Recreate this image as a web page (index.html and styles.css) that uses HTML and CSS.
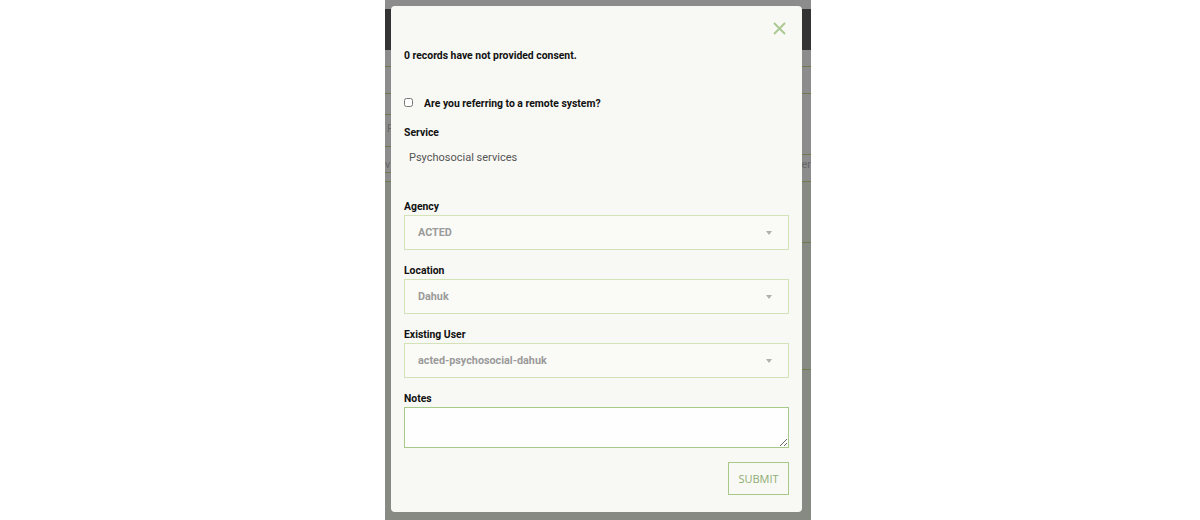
FILE: index.html
```html
<!DOCTYPE html>
<html>
<head>
<meta charset="utf-8">
<link rel="stylesheet" href="styles.css">
</head>
<body>
<div class="page">
  <div class="backdrop">
    <div class="bd-top"></div>
    <div class="bd-header"></div>
    <div class="bd-row bd-r1"></div>
    <div class="bd-row bd-r2"></div>
    <div class="bd-row bd-r3">
      <span class="bd-f">F</span>
      <span class="seg seg-l" style="top:20px"></span>
      <span class="seg seg-l" style="top:52px"></span>
      <span class="seg seg-l" style="top:78px"></span>
      <span class="seg seg-r" style="top:60px"></span>
      <span class="bd-v">v</span><span class="bd-ler">ler</span>
    </div>
    <div class="bd-lower">
      <span class="seg seg-r" style="top:60px"></span>
      <span class="seg seg-r" style="top:187px"></span>
    </div>

    <div class="modal">
      <button class="close" aria-label="Close">
        <svg width="13" height="13" viewBox="0 0 13 13"><path d="M1 1L12 12M12 1L1 12" stroke="#a9c88f" stroke-width="1.8" fill="none"/></svg>
      </button>
      <p class="title">0 records have not provided consent.</p>
      <label class="check-row"><input type="checkbox" class="cb"><span>Are you referring to a remote system?</span></label>
      <div class="label label-service">Service</div>
      <div class="service-value">Psychosocial services</div>

      <div class="field first">
        <div class="label">Agency</div>
        <div class="select"><span>ACTED</span><i class="arrow"></i></div>
      </div>
      <div class="field">
        <div class="label">Location</div>
        <div class="select"><span>Dahuk</span><i class="arrow"></i></div>
      </div>
      <div class="field">
        <div class="label">Existing User</div>
        <div class="select"><span>acted-psychosocial-dahuk</span><i class="arrow"></i></div>
      </div>
      <div class="field">
        <div class="label">Notes</div>
        <textarea class="notes"></textarea>
      </div>
      <div class="actions"><button class="submit">SUBMIT</button></div>
    </div>
  </div>
</div>
</body>
</html>
```
FILE: styles.css
```css
html, body {
  margin: 0;
  padding: 0;
  background: #ffffff;
  font-family: Roboto, "Liberation Sans", Arial, sans-serif;
}
.page {
  width: 1200px;
  height: 520px;
  display: flex;
  padding-left: 385px;
  box-sizing: border-box;
}
.backdrop {
  position: relative;
  width: 426px;
  height: 520px;
  background: #878a82;
  display: flex;
  flex-direction: column;
  overflow: hidden;
}
.bd-top { height: 9px; background: #8c8c8c; }
.bd-header { height: 41px; background: #343434; }
.bd-row { background: #8c8c8c; border-bottom: 1px solid #6f7a4e; position: relative; }
.bd-r1 { height: 16px; }
.bd-r2 { height: 26px; }
.bd-r3 { height: 87px; }
.seg { position: absolute; width: 10px; border-top: 1px solid #6f7a4e; }
.seg-l { left: 0; }
.seg-r { right: 0; }
.bd-f { position: absolute; left: 2px; top: 28px; font-size: 11px; color: #666; }
.bd-v { position: absolute; left: 0; top: 64px; font-size: 11px; color: #666; }
.bd-ler { position: absolute; right: 0; top: 64px; font-size: 11px; color: #666; }
.bd-lower { flex: 1; background: #878a82; position: relative; }

.modal {
  position: absolute;
  left: 6px;
  top: 6px;
  width: 411px;
  height: 506px;
  box-sizing: border-box;
  background: #f8f8f4;
  border-radius: 4px;
  padding: 43px 13px 0 13px;
}
.close {
  position: absolute;
  top: 16px;
  right: 16px;
  width: 13px;
  height: 13px;
  padding: 0;
  border: 0;
  background: none;
  display: flex;
}
.title {
  margin: 0;
  font-size: 10.4px;
  line-height: 14px;
  font-weight: bold;
  color: #111;
}
.check-row {
  display: flex;
  align-items: center;
  margin-top: 33px;
  height: 14px;
  font-size: 10.4px;
  font-weight: bold;
  color: #111;
}
.cb {
  width: 9px;
  height: 9px;
  margin: 0 11px 0 0;
  position: relative;
  top: -1px;
}
.label {
  font-size: 10.4px;
  line-height: 14px;
  font-weight: bold;
  color: #111;
}
.label-service { margin-top: 16px; }
.service-value {
  margin-top: 10px;
  padding-left: 5px;
  font-size: 11px;
  line-height: 16px;
  color: #555;
}
.field { margin-top: 14px; }
.field.first { margin-top: 34px; }
.field .label { margin-bottom: 1px; }
.select {
  height: 35px;
  box-sizing: border-box;
  border: 1px solid #d4e2b9;
  background: #fafaf7;
  display: flex;
  align-items: center;
  justify-content: space-between;
  padding: 0 16px 0 13px;
  font-size: 10.8px;
  font-weight: bold;
  color: #9a9a9a;
}
.arrow {
  width: 0;
  height: 0;
  border-left: 3px solid transparent;
  border-right: 3px solid transparent;
  border-top: 4px solid #b0b0b0;
}
.notes {
  display: block;
  width: 385px;
  height: 41px;
  box-sizing: border-box;
  border: 1px solid #a7c98a;
  background: #fefefe;
  resize: vertical;
  outline: none;
  padding: 4px;
  margin: 0;
  font-family: inherit;
}
.actions {
  display: flex;
  justify-content: flex-end;
  margin-top: 14px;
}
.submit {
  width: 61px;
  height: 33px;
  border: 1px solid #a9c98b;
  background: transparent;
  color: #8eac73;
  font-family: "Open Sans", Roboto, sans-serif;
  font-size: 11px;
  padding: 0;
}
```
